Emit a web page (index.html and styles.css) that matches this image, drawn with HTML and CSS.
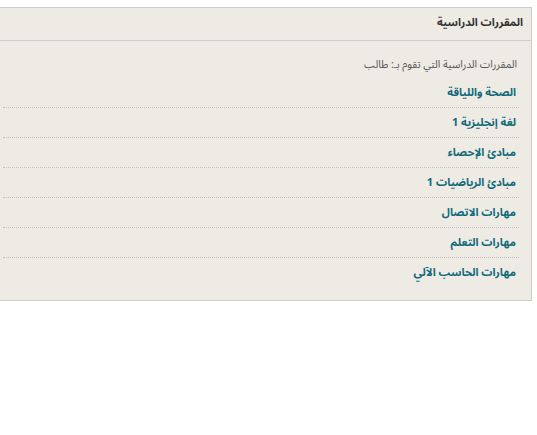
FILE: index.html
```html
<!DOCTYPE html>
<html lang="ar" dir="rtl">
<head>
<meta charset="utf-8">
<link rel="stylesheet" href="styles.css">
</head>
<body>
<div class="panel">
  <div class="panel-head">المقررات الدراسية</div>
  <div class="panel-body">
    <p class="intro">المقررات الدراسية التي تقوم بـ: طالب</p>
    <ul class="courses">
      <li><a href="#">الصحة واللياقة</a></li>
      <li><a href="#">لغة إنجليزية 1</a></li>
      <li><a href="#">مبادئ الإحصاء</a></li>
      <li><a href="#">مبادئ الرياضيات 1</a></li>
      <li><a href="#">مهارات الاتصال</a></li>
      <li><a href="#">مهارات التعلم</a></li>
      <li><a href="#">مهارات الحاسب الآلي</a></li>
    </ul>
  </div>
</div>
</body>
</html>
```
FILE: styles.css
```css
html, body {
  margin: 0;
  padding: 0;
  background: #fff;
}
body {
  font-family: "Noto Sans Arabic", "Noto Naskh Arabic", "Noto Kufi Arabic", "DejaVu Sans", sans-serif;
  font-size: 11px;
}
.panel {
  margin-top: 7px;
  margin-right: 5px;
  width: 542px;
  box-sizing: border-box;
  background: #eeebe4;
  border: 1px solid #cfcdc9;
  box-shadow: 0 1px 1px rgba(0,0,0,0.08);
}
.panel-head {
  height: 32px;
  line-height: 29px;
  padding: 0 8px;
  font-weight: bold;
  color: #333;
  border-bottom: 1px solid #cfcdc9;
}
.panel-body {
  padding: 15px 12px 13px 12px;
}
.intro {
  margin: 0 0 4px 0;
  padding-right: 2px;
  color: #555;
  font-size: 10.5px;
  line-height: 18px;
}
.courses {
  list-style: none;
  margin: 0;
  padding: 0;
}
.courses li {
  height: 29px;
  line-height: 29px;
  padding-right: 3px;
  border-bottom: 1px dotted #c4c2bd;
}
.courses li:last-child {
  border-bottom: none;
}
.courses a {
  color: #10697a;
  font-weight: bold;
  text-decoration: none;
}
```
